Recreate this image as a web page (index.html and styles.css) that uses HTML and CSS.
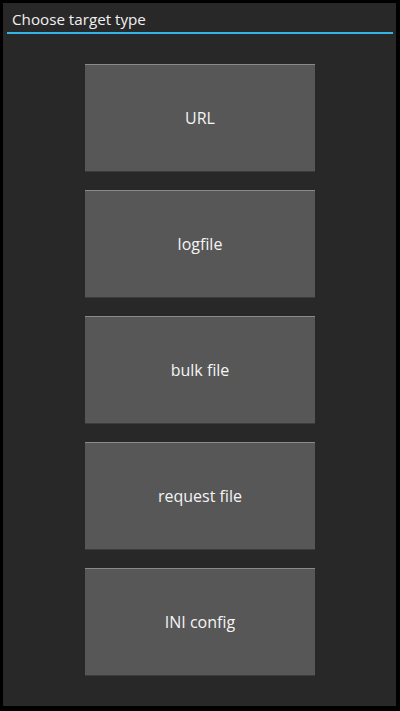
FILE: index.html
```html
<!DOCTYPE html>
<html>
<head>
<meta charset="utf-8">
<link rel="stylesheet" href="styles.css">
</head>
<body>
<div class="dialog">
  <div class="title">Choose target type</div>
  <div class="list">
    <div class="btn">URL</div>
    <div class="btn">logfile</div>
    <div class="btn">bulk file</div>
    <div class="btn">request file</div>
    <div class="btn">INI config</div>
  </div>
</div>
</body>
</html>
```
FILE: styles.css
```css
html, body {
  margin: 0;
  padding: 0;
  background: #000;
  width: 400px;
  height: 711px;
  overflow: hidden;
}
body {
  padding: 3px 4px 5px 3px;
  box-sizing: border-box;
  font-family: "Open Sans", "DejaVu Sans", sans-serif;
}
.dialog {
  background: #282828;
  height: 703px;
  box-sizing: border-box;
}
.title {
  margin: 0 3px 0 4px;
  border-bottom: 2px solid #33b5e5;
  color: #f0f0f0;
  font-size: 15.2px;
  line-height: 20px;
  padding: 6px 0 0 5px;
  height: 23px;
}
.list {
  display: flex;
  flex-direction: column;
  align-items: center;
  gap: 18px;
  padding-top: 30px;
  padding-left: 1px;
}
.btn {
  width: 230px;
  height: 108px;
  box-sizing: border-box;
  background: #575757;
  border-top: 1px solid #8a8a8a;
  border-bottom: 1px solid #3c3c3c;
  display: flex;
  align-items: center;
  justify-content: center;
  color: #f4f4f4;
  font-size: 16px;
}
```
